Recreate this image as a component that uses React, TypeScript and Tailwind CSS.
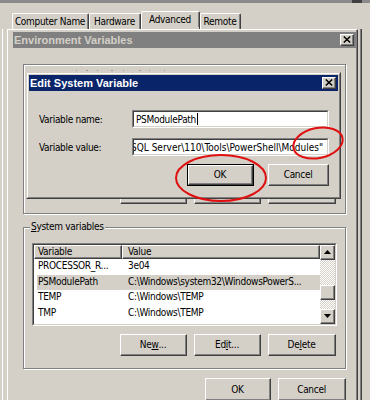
import React from "react";

function Raised({ children, className = "", inner = "justify-center" }: { children?: React.ReactNode; className?: string; inner?: string }) {
  return (
    <div className={`flex border border-t-white border-l-white border-r-[#404040] border-b-[#404040] bg-[#d4d0c8] ${className}`}>
      <div className={`flex min-w-0 flex-1 items-center border-r border-b border-r-[#808080] border-b-[#808080] ${inner}`}>{children}</div>
    </div>
  );
}

function Button({ children, className = "", def = false }: { children: React.ReactNode; className?: string; def?: boolean }) {
  if (def) {
    return (
      <div className={`flex border border-black ${className}`}>
        <Raised className="flex-1">{children}</Raised>
      </div>
    );
  }
  return <Raised className={className}>{children}</Raised>;
}

function Sunken({ children, className = "" }: { children?: React.ReactNode; className?: string }) {
  return (
    <div className={`flex border border-t-[#808080] border-l-[#808080] border-r-white border-b-white ${className}`}>
      <div className="flex min-w-0 flex-1 overflow-hidden border border-t-[#404040] border-l-[#404040] border-r-[#d4d0c8] border-b-[#d4d0c8] bg-white">{children}</div>
    </div>
  );
}

function CloseBtn() {
  return (
    <Raised className="h-[12px] w-[14px]">
      <svg width="8" height="7" viewBox="0 0 8 7">
        <path d="M0.8 0.5 L7.2 6.5 M7.2 0.5 L0.8 6.5" stroke="#000" strokeWidth="1.5" />
      </svg>
    </Raised>
  );
}

function Group({ label, children, className = "" }: { label?: React.ReactNode; children?: React.ReactNode; className?: string }) {
  return (
    <div className={`relative border border-[#808080] shadow-[1px_1px_0_#fff,inset_1px_1px_0_#fff] ${className}`}>
      {label && <span className="absolute left-[6px] top-[-7px] bg-[#d4d0c8] px-[1px] leading-[12px]">{label}</span>}
      {children}
    </div>
  );
}

function Tab({ children, className = "", sel = false }: { children: React.ReactNode; className?: string; sel?: boolean }) {
  return (
    <div className={`flex rounded-t-[2px] border-t border-l border-r border-t-white border-l-white border-r-[#404040] ${sel ? "h-[18px] pb-[2px]" : "h-[16px]"} ${className}`}>
      <div className="flex flex-1 items-center justify-center whitespace-nowrap border-r border-r-[#808080]">{children}</div>
    </div>
  );
}

const Up = () => (
  <svg width="7" height="4" viewBox="0 0 7 4"><path d="M0 4 L3.5 0 L7 4 Z" fill="#000" /></svg>
);
const Down = () => (
  <svg width="7" height="4" viewBox="0 0 7 4"><path d="M0 0 L7 0 L3.5 4 Z" fill="#000" /></svg>
);

const rows = [
  { n: "PROCESSOR_R...", v: "3e04" },
  { n: "PSModulePath", v: "C:\\Windows\\system32\\WindowsPowerS...", sel: true },
  { n: "TEMP", v: "C:\\Windows\\TEMP" },
  { n: "TMP", v: "C:\\Windows\\TEMP" },
];

export default function App() {
  return (
    <div className="relative h-[400px] w-[370px] overflow-hidden bg-[#d4d0c8] font-['DejaVu_Sans_Condensed','Liberation_Sans',Arial,sans-serif] text-[10px] leading-[13px] tracking-[-0.3px] text-black">
      {/* top bar */}
      <div className="flex h-[3px] bg-[#8b8b8b]">
        <div className="ml-[352px] w-[10px] bg-[#404040]" />
      </div>

      {/* tabs */}
      <div className="mt-[8px] flex h-[18px] items-end pl-[12px]">
        <Tab className="w-[77px]">Computer Name</Tab>
        <Tab className="w-[52px]">Hardware</Tab>
        <Tab className="w-[59px]" sel>Advanced</Tab>
        <Tab className="w-[41px]">Remote</Tab>
      </div>

      {/* behind panel edges */}
      <div className="absolute left-[2px] top-[29px] h-[371px] w-px bg-white" />
      <div className="absolute left-[360px] top-[29px] flex h-[371px] w-[2px] border-r border-r-[#404040] bg-[#808080]" />

      {/* Environment Variables window */}
      <div className="absolute left-[7px] top-[29px] h-[380px] w-[351px] border-t border-l border-r border-t-white border-l-white border-r-[#404040]">
        <div className="flex h-full flex-col border-r border-r-[#808080] pl-[5px] pt-[2px]">
          <div className="flex h-[16px] items-center justify-between bg-[#808080] pl-[1px] pr-[2px]">
            <span className="font-['Liberation_Sans',Arial,sans-serif] text-[11px] font-bold tracking-normal text-[#d4d0c8]">Environment Variables</span>
            <CloseBtn />
          </div>
          <div className="flex flex-col px-[10px]">
            <Group className="mt-[16px] flex h-[150px] flex-col justify-end px-[8px] pb-[9px]">
              <div className="flex justify-end gap-[7px] pr-[1px]">
                <Button className="h-[22px] w-[67px]">Ne<u>w</u>...</Button>
                <Button className="h-[22px] w-[67px]">Ed<u>i</u>t...</Button>
                <Button className="h-[22px] w-[68px]">De<u>l</u>ete</Button>
              </div>
            </Group>

            <Group className="mt-[13px] flex flex-col px-[8px] pb-[12px] pt-[15px]" label={<><u>S</u>ystem variables</>}>
              <Sunken className="h-[83px] w-full">
                <div className="flex min-w-0 flex-1 flex-col">
                  <div className="flex h-[14px]">
                    <Raised className="w-[88px]" inner="justify-start pl-[3px]">Variable</Raised>
                    <Raised className="flex-1" inner="justify-start pl-[5px]">Value</Raised>
                  </div>
                  {rows.map((r) => (
                    <div key={r.n} className="flex h-[15.5px]">
                      <div className={`flex flex-1 items-start overflow-hidden whitespace-nowrap ${r.sel ? "ml-[3px] bg-[#d4d0c8]" : ""}`}>
                        <span className={`shrink-0 ${r.sel ? "w-[85px] pl-[1px]" : "w-[88px] pl-[4px]"}`}>{r.n}</span>
                        <span className="pl-[6px]">{r.v}</span>
                      </div>
                    </div>
                  ))}
                </div>
                <div className="flex w-[15px] flex-col">
                  <Raised className="h-[15px] w-[15px]"><Up /></Raised>
                  <div className="flex flex-1 flex-col bg-[repeating-conic-gradient(#d4d0c8_0%_25%,#ffffff_0%_50%)] bg-[length:2px_2px]">
                    <div className="h-[25px]" />
                    <Raised className="h-[15px] w-[15px]" />
                  </div>
                  <Raised className="h-[15px] w-[15px]"><Down /></Raised>
                </div>
              </Sunken>
              <div className="mt-[8px] flex justify-end gap-[7px] pr-[1px]">
                <Button className="h-[22px] w-[67px]">Ne<u>w</u>...</Button>
                <Button className="h-[22px] w-[67px]">Ed<u>i</u>t...</Button>
                <Button className="h-[22px] w-[68px]">De<u>l</u>ete</Button>
              </div>
            </Group>

            <div className="mt-[9px] flex justify-end gap-[7px]">
              <Button className="h-[23px] w-[66px]">OK</Button>
              <Button className="h-[23px] w-[68px]">Cancel</Button>
            </div>
          </div>
        </div>
      </div>

      {/* remnant of hidden label */}
      <svg className="absolute left-[70px] top-[69px]" width="100" height="3">
        {[6, 16, 17, 27, 41, 42, 53, 69, 70, 79, 94].map((x) => (
          <rect key={x} x={x} y={1} width={1} height={1} fill="#9a9a9a" />
        ))}
      </svg>

      {/* Edit System Variable dialog */}
      <div className="absolute left-[26px] top-[72px] h-[127px] w-[315px] border border-t-[#d4d0c8] border-l-[#d4d0c8] border-r-[#404040] border-b-[#404040] bg-[#d4d0c8]">
        <div className="flex h-full flex-col border border-t-white border-l-white border-r-[#808080] border-b-[#808080] p-[1px]">
          <div className="flex h-[16px] items-center justify-between bg-[#0a246a] pl-[1px] pr-[2px]">
            <span className="font-['Liberation_Sans',Arial,sans-serif] text-[11px] font-bold tracking-normal text-white">Edit System Variable</span>
            <CloseBtn />
          </div>
          <div className="flex flex-col pl-[10px] pr-[9px]">
            <div className="mt-[19px] flex h-[18px] items-center justify-between">
              <span>Variable name:</span>
              <Sunken className="h-[18px] w-[197px]">
                <div className="flex items-center pl-[2px]">
                  <span>PSModulePath</span>
                  <span className="ml-[1px] h-[12px] w-px bg-black" />
                </div>
              </Sunken>
            </div>
            <div className="mt-[10px] flex h-[18px] items-center justify-between">
              <span>Variable value:</span>
              <Sunken className="h-[18px] w-[197px]">
                <div className="flex flex-1 items-center whitespace-nowrap">
                  <span className="ml-[-3px] tracking-normal">SQL Server\110\Tools\PowerShell\Modules"</span>
                </div>
              </Sunken>
            </div>
            <div className="mt-[8px] flex justify-end gap-[14px]">
              <Button def className="h-[22px] w-[67px]">OK</Button>
              <Button className="h-[22px] w-[61px]">Cancel</Button>
            </div>
          </div>
        </div>
      </div>

      {/* red annotation ellipses */}
      <svg className="pointer-events-none absolute left-0 top-0" width="370" height="400">
        <ellipse cx="221" cy="178" rx="45" ry="23" fill="none" stroke="#e01010" strokeWidth="2" />
        <ellipse cx="318" cy="143" rx="25" ry="15" transform="rotate(-12 318 143)" fill="none" stroke="#e01010" strokeWidth="2" />
      </svg>
    </div>
  );
}
